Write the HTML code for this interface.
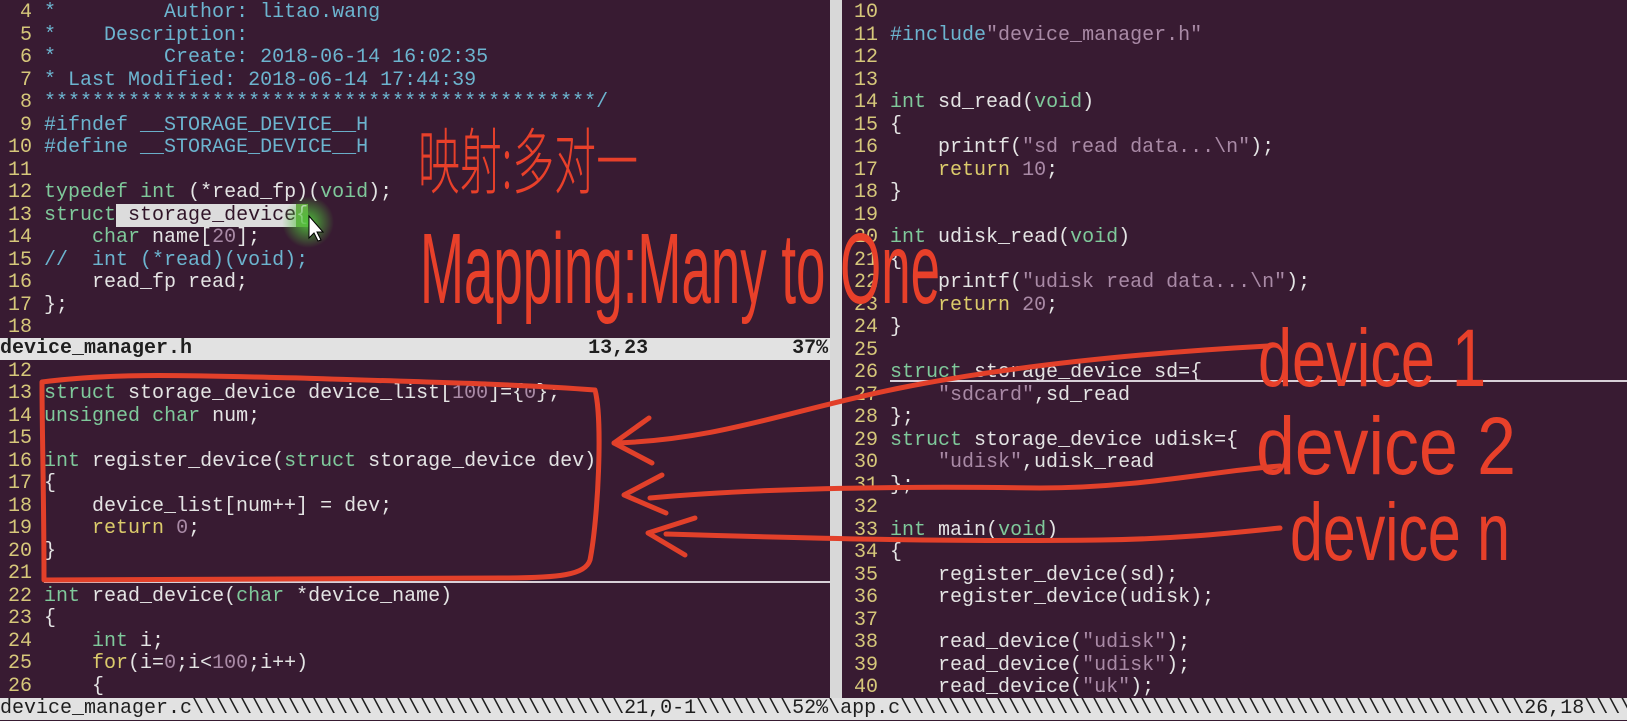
<!DOCTYPE html>
<html><head><meta charset="utf-8"><style>
*{margin:0;padding:0;box-sizing:border-box}
body{width:1627px;height:721px;background:#381b32;overflow:hidden;position:relative;font-family:"Liberation Mono",monospace;font-size:20px;color:#e4e4e4}
.pane{position:absolute;line-height:22.5px}
.l{height:22.5px;white-space:pre}
.n{color:#d6c77a}
.c{color:#6cb4cf}
.t{color:#7fc99b}
.s{color:#dccb6b}
.q{color:#a98aa6}
.sel{background:#dcdcdc;color:#301428}
.bar{position:absolute;background:#e2e2e2;color:#1e1e1e;white-space:pre;height:22px;line-height:22px;overflow:hidden}
</style></head><body>
<div class="pane" style="left:-4px;top:2px;width:832px">
<div class="l"><span class="n">  4</span> <span class="c">*         Author: litao.wang</span></div>
<div class="l"><span class="n">  5</span> <span class="c">*    Description:</span></div>
<div class="l"><span class="n">  6</span> <span class="c">*         Create: 2018-06-14 16:02:35</span></div>
<div class="l"><span class="n">  7</span> <span class="c">* Last Modified: 2018-06-14 17:44:39</span></div>
<div class="l"><span class="n">  8</span> <span class="c">**********************************************/</span></div>
<div class="l"><span class="n">  9</span> <span class="c">#ifndef __STORAGE_DEVICE__H</span></div>
<div class="l"><span class="n"> 10</span> <span class="c">#define __STORAGE_DEVICE__H</span></div>
<div class="l"><span class="n"> 11</span></div>
<div class="l"><span class="n"> 12</span> <span class="t">typedef</span> <span class="t">int</span> (*read_fp)(<span class="t">void</span>);</div>
<div class="l"><span class="n"> 13</span> <span class="t">struct</span><span class="sel"> storage_device</span><span style="background:#6fa04a">{</span></div>
<div class="l"><span class="n"> 14</span>     <span class="t">char</span> name[<span class="q">20</span>];</div>
<div class="l"><span class="n"> 15</span> <span class="c">//  int (*read)(void);</span></div>
<div class="l"><span class="n"> 16</span>     read_fp read;</div>
<div class="l"><span class="n"> 17</span> };</div>
<div class="l"><span class="n"> 18</span></div>
</div>
<div class="bar" style="left:0;top:338px;width:830px"><b>device_manager.h</b>                                 <b>13,23</b>            <b>37%</b></div>
<div class="pane" style="left:-4px;top:360.5px;width:834px">
<div class="l"><span class="n"> 12</span></div>
<div class="l"><span class="n"> 13</span> <span class="t">struct</span> storage_device device_list[<span class="q">100</span>]={<span class="q">0</span>};</div>
<div class="l"><span class="n"> 14</span> <span class="t">unsigned</span> <span class="t">char</span> num;</div>
<div class="l"><span class="n"> 15</span></div>
<div class="l"><span class="n"> 16</span> <span class="t">int</span> register_device(<span class="t">struct</span> storage_device dev)</div>
<div class="l"><span class="n"> 17</span> {</div>
<div class="l"><span class="n"> 18</span>     device_list[num++] = dev;</div>
<div class="l"><span class="n"> 19</span>     <span class="s">return</span> <span class="q">0</span>;</div>
<div class="l"><span class="n"> 20</span> }</div>
<div class="l"><span class="n"> 21</span></div>
<div class="l"><span class="n"> 22</span> <span class="t">int</span> read_device(<span class="t">char</span> *device_name)</div>
<div class="l"><span class="n"> 23</span> {</div>
<div class="l"><span class="n"> 24</span>     <span class="t">int</span> i;</div>
<div class="l"><span class="n"> 25</span>     <span class="s">for</span>(i=<span class="q">0</span>;i&lt;<span class="q">100</span>;i++)</div>
<div class="l"><span class="n"> 26</span>     {</div>
</div>
<div style="position:absolute;left:44px;top:581px;width:786px;height:2px;background:#d8d0d8"></div>
<div style="position:absolute;left:830px;top:0;width:12px;height:698px;background:#d8d8d8"></div>
<div class="pane" style="left:842px;top:2px;width:785px">
<div class="l"><span class="n"> 10</span></div>
<div class="l"><span class="n"> 11</span> <span class="c">#include</span><span class="q">"device_manager.h"</span></div>
<div class="l"><span class="n"> 12</span></div>
<div class="l"><span class="n"> 13</span></div>
<div class="l"><span class="n"> 14</span> <span class="t">int</span> sd_read(<span class="t">void</span>)</div>
<div class="l"><span class="n"> 15</span> {</div>
<div class="l"><span class="n"> 16</span>     printf(<span class="q">"sd read data...\n"</span>);</div>
<div class="l"><span class="n"> 17</span>     <span class="s">return</span> <span class="q">10</span>;</div>
<div class="l"><span class="n"> 18</span> }</div>
<div class="l"><span class="n"> 19</span></div>
<div class="l"><span class="n"> 20</span> <span class="t">int</span> udisk_read(<span class="t">void</span>)</div>
<div class="l"><span class="n"> 21</span> {</div>
<div class="l"><span class="n"> 22</span>     printf(<span class="q">"udisk read data...\n"</span>);</div>
<div class="l"><span class="n"> 23</span>     <span class="s">return</span> <span class="q">20</span>;</div>
<div class="l"><span class="n"> 24</span> }</div>
<div class="l"><span class="n"> 25</span></div>
<div class="l"><span class="n"> 26</span> <span class="t">struct</span> storage_device sd={</div>
<div class="l"><span class="n"> 27</span>     <span class="q">"sdcard"</span>,sd_read</div>
<div class="l"><span class="n"> 28</span> };</div>
<div class="l"><span class="n"> 29</span> <span class="t">struct</span> storage_device udisk={</div>
<div class="l"><span class="n"> 30</span>     <span class="q">"udisk"</span>,udisk_read</div>
<div class="l"><span class="n"> 31</span> };</div>
<div class="l"><span class="n"> 32</span></div>
<div class="l"><span class="n"> 33</span> <span class="t">int</span> main(<span class="t">void</span>)</div>
<div class="l"><span class="n"> 34</span> {</div>
<div class="l"><span class="n"> 35</span>     register_device(sd);</div>
<div class="l"><span class="n"> 36</span>     register_device(udisk);</div>
<div class="l"><span class="n"> 37</span></div>
<div class="l"><span class="n"> 38</span>     read_device(<span class="q">"udisk"</span>);</div>
<div class="l"><span class="n"> 39</span>     read_device(<span class="q">"udisk"</span>);</div>
<div class="l"><span class="n"> 40</span>     read_device(<span class="q">"uk"</span>);</div>
</div>
<div style="position:absolute;left:890px;top:380px;width:737px;height:2px;background:#d8d0d8"></div>
<div class="bar" style="left:0;top:698px;width:1627px">device_manager.c\\\\\\\\\\\\\\\\\\\\\\\\\\\\\\\\\\\\21,0-1\\\\\\\\52%\app.c\\\\\\\\\\\\\\\\\\\\\\\\\\\\\\\\\\\\\\\\\\\\\\\\\\\\26,18\\\\\\\\\\\\\\\\\\\\</div>
<svg width="1627" height="721" style="position:absolute;left:0;top:0" xmlns="http://www.w3.org/2000/svg">
<defs><radialGradient id="g"><stop offset="0" stop-color="#4fc23a" stop-opacity=".95"/><stop offset="1" stop-color="#4fc23a" stop-opacity="0"/></radialGradient></defs>
<circle cx="308" cy="222" r="26" fill="url(#g)"/>
<path d="M309 216 L309 238 L314 233 L318 241 L321 240 L317 232 L323 232 Z" fill="#fff" stroke="#000" stroke-width="1"/>
<g fill="#e8402a" font-family="Noto Sans CJK SC, sans-serif">
<text x="418" y="188" font-size="72" font-weight="300" textLength="220" lengthAdjust="spacingAndGlyphs">映射:多对一</text>
</g>
<g fill="#e8402a" font-family="Liberation Sans, sans-serif" font-weight="normal">
<text x="420" y="303" font-size="100" textLength="520" lengthAdjust="spacingAndGlyphs">Mapping:Many to One</text>
<text x="1258" y="386" font-size="82" textLength="228" lengthAdjust="spacingAndGlyphs">device 1</text>
<text x="1256" y="474" font-size="82" textLength="260" lengthAdjust="spacingAndGlyphs">device 2</text>
<text x="1290" y="560" font-size="82" textLength="220" lengthAdjust="spacingAndGlyphs">device n</text>
</g>
<g fill="none" stroke="#e2402a" stroke-width="5" stroke-linecap="round" stroke-linejoin="round">
<path d="M42 382 C120 372 200 376 300 378 C420 382 520 384 595 390 C603 420 598 520 590 560 C585 575 560 578 500 578 L44 580 C44 500 42 430 42 382"/>
<path d="M614 443 C720 440 790 410 900 388 C1020 364 1160 352 1268 346"/>
<path d="M649 418 L614 443 L652 463"/>
<path d="M650 498 C760 488 900 486 1040 488 C1140 488 1220 470 1280 466"/>
<path d="M662 475 L624 495 L666 513"/>
<path d="M666 534 C800 538 950 542 1100 540 C1180 539 1240 532 1280 528"/>
<path d="M695 518 L648 533 L685 555"/>
</g>
</svg>
</body></html>
